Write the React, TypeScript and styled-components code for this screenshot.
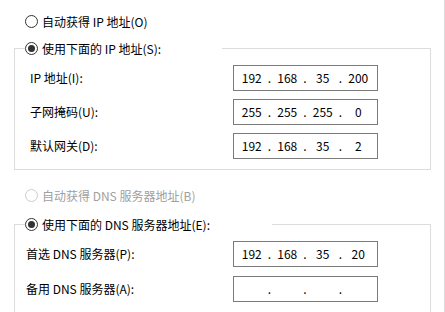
import React from "react";
import styled, { createGlobalStyle } from "styled-components";

const Global = createGlobalStyle`
  html, body { margin: 0; padding: 0; background: #fff; }
  body {
    font-family: "Microsoft YaHei", "Noto Sans CJK SC", sans-serif;
    font-size: 12px;
    color: #000;
  }
`;

const Page = styled.div`
  width: 445px;
  height: 312px;
  box-sizing: border-box;
  overflow: hidden;
  background: #fff;
  border-right: 1px solid #dadada;
  padding-left: 14px;
  display: flex;
  flex-direction: column;
  align-items: flex-start;
`;

const RadioRow = styled.div<{ $top: number; $disabled?: boolean }>`
  margin-top: ${(p) => p.$top}px;
  margin-left: 11px;
  height: 15px;
  display: flex;
  align-items: center;
  color: ${(p) => (p.$disabled ? "#a0a0a0" : "#000")};
  white-space: nowrap;
  line-height: 15px;
`;

const Circle = styled.span<{ $disabled?: boolean }>`
  flex: none;
  width: 13px;
  height: 13px;
  box-sizing: border-box;
  border-radius: 50%;
  border: 1px solid ${(p) => (p.$disabled ? "#cccccc" : "#333333")};
  background: #fff;
  display: flex;
  align-items: center;
  justify-content: center;
  margin-right: 4px;
`;

const Dot = styled.span`
  width: 7px;
  height: 7px;
  border-radius: 50%;
  background: #333;
`;

const Group = styled.fieldset<{ $top: number; $bottom: number }>`
  margin: ${(p) => p.$top}px 0 0 0;
  padding: 0 0 ${(p) => p.$bottom}px 0;
  border: 1px solid #dcdcdc;
  width: 417px;
  box-sizing: border-box;
  min-width: 0;
  flex: none;
`;

const Legend = styled.legend<{ $width: number }>`
  padding: 0;
  margin-left: 10px;
  width: ${(p) => p.$width}px;
  height: 15px;
`;

const LegendInner = styled.div`
  height: 15px;
  display: flex;
  align-items: center;
  white-space: nowrap;
  line-height: 15px;
`;

const Rows = styled.div<{ $indent: number; $gap: number }>`
  display: grid;
  grid-template-columns: 1fr 145px;
  row-gap: ${(p) => p.$gap}px;
  padding: 9px 52px 0 ${(p) => p.$indent}px;
`;

const Label = styled.div`
  height: 26px;
  line-height: 26px;
  white-space: nowrap;
`;

const IpBox = styled.div`
  height: 26px;
  box-sizing: border-box;
  border: 1px solid #7a7a7a;
  background: #fff;
  display: flex;
  align-items: center;
  padding: 0 3px 0 2px;
`;

const Field = styled.span`
  flex: 1;
  text-align: center;
  line-height: 24px;
`;

const Sep = styled.span`
  flex: none;
  width: 4px;
  text-align: center;
  line-height: 24px;
`;

function Ip({ parts }: { parts: string[] }) {
  return (
    <IpBox>
      <Field>{parts[0]}</Field>
      <Sep>.</Sep>
      <Field>{parts[1]}</Field>
      <Sep>.</Sep>
      <Field>{parts[2]}</Field>
      <Sep>.</Sep>
      <Field>{parts[3]}</Field>
    </IpBox>
  );
}

function Radio({ checked, disabled }: { checked?: boolean; disabled?: boolean }) {
  return <Circle $disabled={disabled}>{checked ? <Dot /> : null}</Circle>;
}

export default function App() {
  return (
    <>
      <Global />
      <Page>
        <RadioRow $top={14}>
          <Radio />
          自动获得 IP 地址(O)
        </RadioRow>
        <Group $top={12} $bottom={10}>
          <Legend $width={197}>
            <LegendInner>
              <Radio checked />
              使用下面的 IP 地址(S):
            </LegendInner>
          </Legend>
          <Rows $indent={15} $gap={8}>
            <Label>IP 地址(I):</Label>
            <Ip parts={["192", "168", "35", "200"]} />
            <Label>子网掩码(U):</Label>
            <Ip parts={["255", "255", "255", "0"]} />
            <Label>默认网关(D):</Label>
            <Ip parts={["192", "168", "35", "2"]} />
          </Rows>
        </Group>
        <RadioRow $top={18} $disabled>
          <Radio disabled />
          自动获得 DNS 服务器地址(B)
        </RadioRow>
        <Group $top={14} $bottom={20}>
          <Legend $width={247}>
            <LegendInner>
              <Radio checked />
              使用下面的 DNS 服务器地址(E):
            </LegendInner>
          </Legend>
          <Rows $indent={11} $gap={9}>
            <Label>首选 DNS 服务器(P):</Label>
            <Ip parts={["192", "168", "35", "20"]} />
            <Label>备用 DNS 服务器(A):</Label>
            <Ip parts={["", "", "", ""]} />
          </Rows>
        </Group>
      </Page>
    </>
  );
}
